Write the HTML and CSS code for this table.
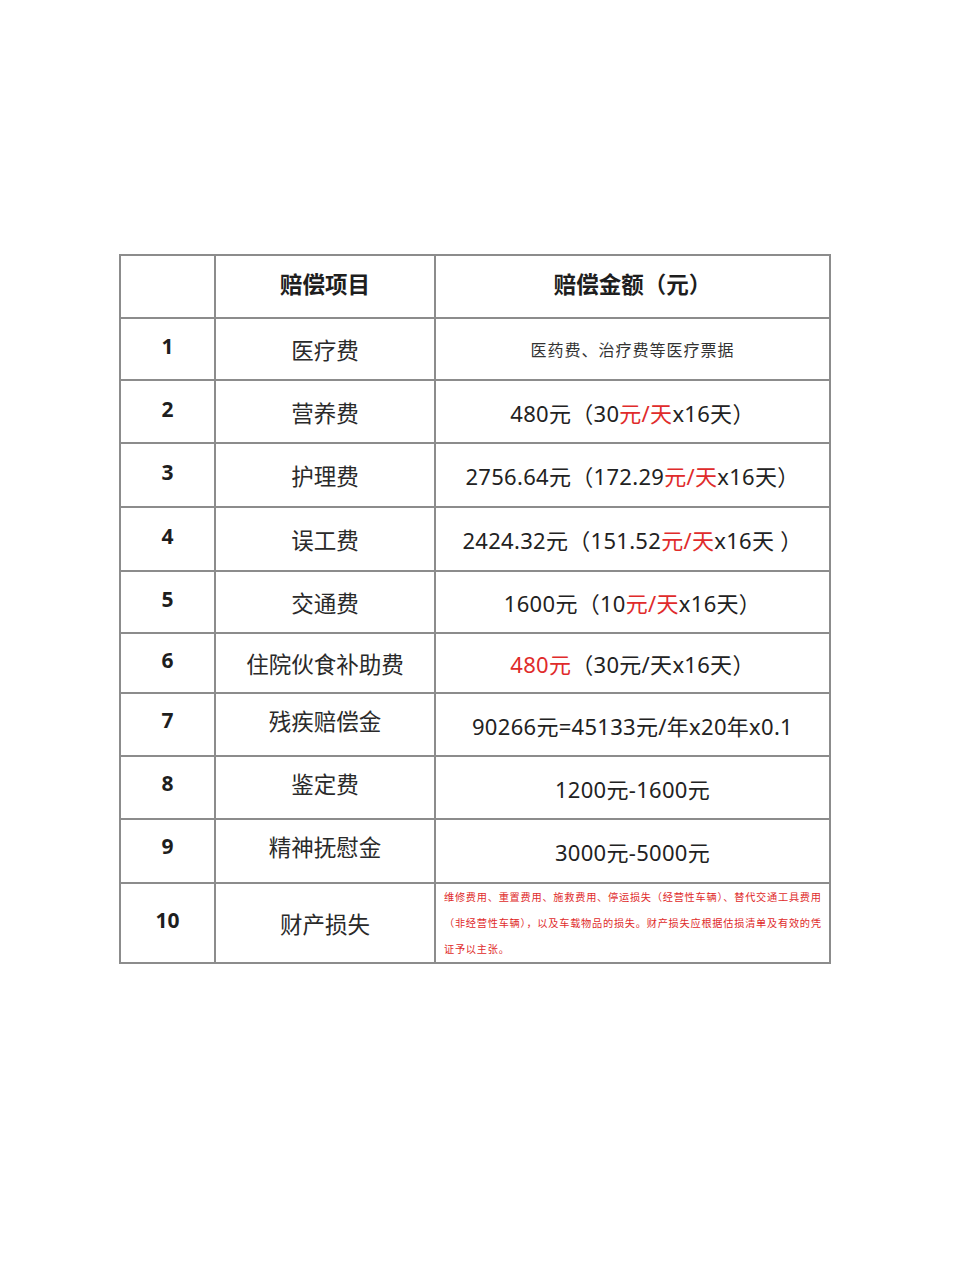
FILE: index.html
```html
<!DOCTYPE html>
<html lang="zh-CN">
<head>
<meta charset="utf-8">
<link rel="stylesheet" href="styles.css">
</head>
<body>
<div class="page">
  <table class="comp">
    <colgroup>
      <col class="c-no">
      <col class="c-item">
      <col class="c-amt">
    </colgroup>
    <thead>
      <tr class="r-h">
        <th></th>
        <th>赔偿项目</th>
        <th>赔偿金额（元）</th>
      </tr>
    </thead>
    <tbody>
      <tr class="r1">
        <td class="no">1</td>
        <td class="item">医疗费</td>
        <td class="amt small">医药费、治疗费等医疗票据</td>
      </tr>
      <tr class="r2">
        <td class="no">2</td>
        <td class="item">营养费</td>
        <td class="amt">480元（30<span class="red">元/天</span>x16天）</td>
      </tr>
      <tr class="r3">
        <td class="no">3</td>
        <td class="item">护理费</td>
        <td class="amt">2756.64元（172.29<span class="red">元/天</span>x16天）</td>
      </tr>
      <tr class="r4">
        <td class="no">4</td>
        <td class="item">误工费</td>
        <td class="amt">2424.32元（151.52<span class="red">元/天</span>x16天 ）</td>
      </tr>
      <tr class="r5">
        <td class="no">5</td>
        <td class="item">交通费</td>
        <td class="amt">1600元（10<span class="red">元/天</span>x16天）</td>
      </tr>
      <tr class="r6">
        <td class="no">6</td>
        <td class="item">住院伙食补助费</td>
        <td class="amt"><span class="red">480元</span>（30元/天x16天）</td>
      </tr>
      <tr class="r7">
        <td class="no up">7</td>
        <td class="item up">残疾赔偿金</td>
        <td class="amt">90266元=45133元/年x20年x0.1</td>
      </tr>
      <tr class="r8">
        <td class="no up">8</td>
        <td class="item up">鉴定费</td>
        <td class="amt">1200元-1600元</td>
      </tr>
      <tr class="r9">
        <td class="no up">9</td>
        <td class="item up">精神抚慰金</td>
        <td class="amt">3000元-5000元</td>
      </tr>
      <tr class="r10">
        <td class="no">10</td>
        <td class="item">财产损失</td>
        <td class="note">维修费用、重置费用、施救费用、停运损失（经营性车辆）、替代交通工具费用<br>（非经营性车辆），以及车载物品的损失。财产损失应根据估损清单及有效的凭<br>证予以主张。</td>
      </tr>
    </tbody>
  </table>
</div>
</body>
</html>
```

FILE: styles.css
```css
html, body {
  margin: 0;
  padding: 0;
  background: #ffffff;
}
body {
  font-family: "Noto Sans", "Noto Sans CJK SC", sans-serif;
  color: #222222;
}
.page {
  width: 960px;
  height: 1280px;
  padding-top: 254px;
  padding-left: 119px;
  box-sizing: border-box;
}
.comp {
  border-collapse: collapse;
  width: 710px;
  table-layout: fixed;
}
.c-no { width: 95px; }
.c-item { width: 220px; }
.c-amt { width: 395px; }
.comp th,
.comp td {
  border: 2px solid #8c8c8c;
  padding: 0;
  text-align: center;
  vertical-align: middle;
}
.comp th {
  font-family: "Noto Sans CJK SC", sans-serif;
  font-size: 22.5px;
  font-weight: 700;
  color: #1e1e1e;
  padding-bottom: 8px;
}
.r-h { height: 63px; }
.r1 { height: 62px; }
.r2 { height: 63px; }
.r3 { height: 64px; }
.r4 { height: 64px; }
.r5 { height: 62px; }
.r6 { height: 60px; }
.r7 { height: 63px; }
.r8 { height: 63px; }
.r9 { height: 64px; }
.r10 { height: 76px; }
.no {
  font-family: "Noto Sans", sans-serif;
  font-size: 21px;
  font-weight: 700;
  color: #1e1e1e;
  padding-bottom: 6px !important;
}
.item {
  font-family: "Noto Sans CJK SC", sans-serif;
  font-size: 22.5px;
  color: #2a2a2a;
}
.up {
  padding-bottom: 10px !important;
}
.amt {
  font-family: "Noto Sans", "Noto Sans CJK SC", sans-serif;
  font-size: 22px;
  color: #222222;
  letter-spacing: 0.3px;
}
.amt.small {
  font-family: "Noto Sans CJK SC", sans-serif;
  font-size: 16px;
  letter-spacing: 1px;
  color: #333333;
}
.red {
  color: #e02b2b;
}
.comp td.note {
  text-align: left;
  vertical-align: top;
  font-family: "Noto Sans CJK SC", sans-serif;
  font-size: 10.2px;
  letter-spacing: 0.75px;
  line-height: 26px;
  color: #e02b2b;
  padding: 0 0 0 8px;
  white-space: nowrap;
  overflow: hidden;
}
```
